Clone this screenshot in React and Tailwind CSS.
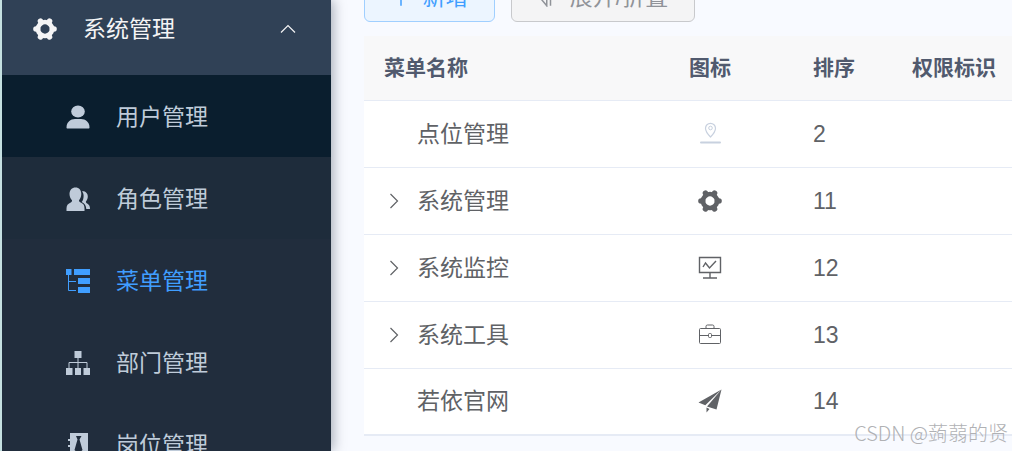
import React, { useState } from 'react';

const GearIcon = () => (
  <svg className="w-6 h-6" viewBox="-12 -12 24 24" fill="none" stroke="currentColor">
    <circle r="7" strokeWidth="4.600" />
    {[0, 60, 120, 180, 240, 300].map((a) => (
      <path key={a} d="M7.500 0H9" strokeWidth="5.600" strokeLinecap="round" transform={`rotate(${a})`} />
    ))}
  </svg>
);

const UserIcon = () => (
  <svg className="w-6 h-6" viewBox="0 0 24 24" fill="currentColor">
    <ellipse cx="12" cy="6.500" rx="6.800" ry="6" />
    <path d="M.5 22.500C.5 17 4.500 14 9 14h6c4.500 0 8.500 3 8.500 8.500 0 .7-.4 1-1 1h-21c-.6 0-1-.3-1-1z" />
  </svg>
);

const PeoplesIcon = () => (
  <svg className="w-6 h-6" viewBox="0 0 24 24" fill="currentColor">
    <path d="M9.500.5c3.600 0 5.800 2.700 5.800 6.500 0 2.500-1 4.800-2.300 6.200 0 1.300.6 1.800 2.200 2.500 2.400 1.100 3.300 2.600 3.300 5.800v2.500H.5v-2.500c0-3.200 1.400-4.700 3.800-5.800 1.200-.6 1.900-1.200 1.700-2.500C4.500 11.800 3.500 9.500 3.500 7c0-3.800 2.400-6.500 6-6.500z" />
    <path d="M16 4.300c3.200-.3 5.800 1.700 5.800 5.200 0 2.200-.8 3.700-1.900 5 0 1 .5 1.500 1.300 2.100 1.900 1.100 2.800 2.700 2.800 5.400h-3.700c-.2-3.300-1.600-5.400-4.600-6.900 1.400-1.700 1.900-4 1.900-6.300 0-1.700-.6-3.300-1.600-4.500z" />
  </svg>
);

const TreeTableIcon = () => (
  <svg className="w-6 h-6" viewBox="0 0 24 24" fill="currentColor">
    <path d="M0 0h5.500v6H0zM8 0h16v6H8zM12 9h12v6H12zM12 18h12v6H12z" />
    <path d="M2.500 6v15.500H10M2.500 12.500H10" fill="none" stroke="currentColor" />
  </svg>
);

const TreeIcon = () => (
  <svg className="w-6 h-6" viewBox="0 0 24 24" fill="currentColor">
    <path d="M8.500 0h7v7h-7zM0 17h6.500v7H0zM9 17h6v7H9zM17.500 17H24v7h-6.500z" />
    <path d="M12 7v10M3 17v-5.500h18V17" fill="none" stroke="currentColor" />
  </svg>
);

const PostIcon = () => (
  <svg className="w-6 h-6" viewBox="0 0 24 24" fill="currentColor">
    <path fillRule="evenodd" d="M4 0h18v24H4v-4H2v-2h2v-4H2v-2h2V8H2V6h2zM10 3l1.500 3.500L8.500 17l4 4 4-4-3-10.500L15.500 3z" />
  </svg>
);

const PointIcon = () => (
  <svg className="w-6 h-6 text-[#c8d1df]" viewBox="0 0 24 24" fill="none" stroke="currentColor">
    <path d="M12.500 15C9.500 12 7.500 9 7.500 6.300a5 5 0 0 1 10 0C17.500 9 15.500 12 12.500 15z" strokeWidth="1.200" />
    <circle cx="12.500" cy="6" r="1.800" />
    <path d="M3 20.500h19" strokeWidth="2" strokeLinecap="round" />
  </svg>
);

const MonitorIcon = () => (
  <svg className="w-6 h-6" viewBox="0 0 24 24" fill="none" stroke="currentColor" strokeWidth="1.400">
    <path d="M1.500 1.500h21v15h-21zM12 16.500v5.500M5 22h14" />
    <path d="M5 11l2.500-4 4 5 6.500-7" />
  </svg>
);

const ToolIcon = () => (
  <svg className="w-6 h-6" viewBox="0 0 24 24" fill="none" stroke="currentColor">
    <rect x="1.500" y="5.500" width="21" height="15" rx="1" />
    <path d="M8 5.500V3.500Q8 2 9.500 2h5Q16 2 16 3.500v2M1.500 12.500h9M13.500 12.500h9" />
    <rect x="10.500" y="10.500" width="3" height="4" rx="1" />
  </svg>
);

const GuideIcon = () => (
  <svg className="w-6 h-6" viewBox="0 0 24 24" fill="currentColor">
    <path d="M23.500.5L.5 13.500l6.800 2.700zM23.500.5L9 17.500l9.500 3zM8.500 18.500v5l3-3.600z" />
  </svg>
);

const LineIcon = ({ className, d }) => (
  <svg className={className} viewBox="0 0 16 16" fill="none" stroke="currentColor" strokeWidth="1.200">
    <path d={d} />
  </svg>
);

const menus = [
  { name: '用户管理', icon: UserIcon, style: 'bg-[#0a1e2e] text-[#bfcbd9]' },
  { name: '角色管理', icon: PeoplesIcon, style: 'bg-[#1e2c3b] text-[#bfcbd9]' },
  { name: '菜单管理', icon: TreeTableIcon, style: 'text-[#409eff]' },
  { name: '部门管理', icon: TreeIcon, style: 'text-[#bfcbd9]' },
  { name: '岗位管理', icon: PostIcon, style: 'text-[#bfcbd9]' },
];

const rows = [
  { name: '点位管理', icon: PointIcon, sort: 2 },
  { name: '系统管理', icon: GearIcon, sort: 11, children: true },
  { name: '系统监控', icon: MonitorIcon, sort: 12, children: true },
  { name: '系统工具', icon: ToolIcon, sort: 13, children: true },
  { name: '若依官网', icon: GuideIcon, sort: 14 },
];

const Sidebar = () => {
  const [open, setOpen] = useState(true);

  return (
    <aside className="relative z-10 w-[331px] shrink-0 bg-[#212d3d] border-l-2 border-[#c5e0e1] shadow-[2px_0_12px_rgba(0,21,41,0.35)]">
      <button
        onClick={() => setOpen(!open)}
        aria-expanded={open}
        className="-mt-[18px] flex h-[93px] w-full items-center bg-[#304156] pl-[31px] pr-[35px] text-[#f4f4f5]"
      >
        <GearIcon />
        <span className="ml-[26px] flex-1 text-left">系统管理</span>
        <LineIcon className="w-4 h-4" d="M1 11.500l7-7 7 7" />
      </button>
      {open && (
        <nav>
          {menus.map(({ name, icon: Icon, style }) => (
            <a key={name} href="#" className={`flex h-[82px] items-center gap-[26px] pl-16 pt-px ${style}`}>
              <Icon />
              <span>{name}</span>
            </a>
          ))}
        </nav>
      )}
    </aside>
  );
};

const App = () => (
  <div className="relative flex h-screen overflow-hidden bg-[#f8faff] font-['Liberation_Sans','Noto_Sans_CJK_SC',sans-serif] text-[23px] leading-8 text-[#606266]">
    <Sidebar />

    <main className="min-w-0 flex-1 pl-[33px]">
      {/* 工具栏 */}
      <div className="-mt-7 flex gap-4">
        <button className="flex h-[50px] w-[131px] items-center justify-center gap-3 rounded-md border border-[#a0cfff] bg-[#ecf5ff] text-[#409eff]">
          <LineIcon className="w-5 h-5" d="M8 1v14M1 8h14" />
          新增
        </button>
        <button className="flex h-[50px] w-[184px] items-center justify-center gap-3 rounded-md border border-[#c8c9cc] bg-[#f4f4f5] text-[#909399]">
          <LineIcon className="w-5 h-5" d="M7 1v14L2 9M10 15V1l5 6" />
          展开/折叠
        </button>
      </div>

      {/* 菜单表格 */}
      <table className="mt-[14px] w-full table-fixed border-collapse bg-white text-left">
        <thead className="bg-[#f8f8f9] text-[21px] text-[#515a6e]">
          <tr className="h-16 border-b border-[#e6ebf5]">
            <th className="w-[263px] pl-5">菜单名称</th>
            <th className="w-[166px] text-center">图标</th>
            <th className="w-[99px] pl-5">排序</th>
            <th className="pl-5">权限标识</th>
          </tr>
        </thead>
        <tbody>
          {rows.map(({ name, icon: Icon, sort, children }) => (
            <tr key={name} className="h-[67px] border-b border-[#e6ebf5] last:border-b-2">
              <td className="pl-[22px]">
                <div className="flex items-center gap-[15px]">
                  {children ? (
                    <button aria-label="展开" className="w-4 h-4">
                      <LineIcon className="w-4 h-4" d="M4.500 1l7 7-7 7" />
                    </button>
                  ) : (
                    <span className="w-4" />
                  )}
                  <span>{name}</span>
                </div>
              </td>
              <td>
                <div className="flex justify-center">
                  <Icon />
                </div>
              </td>
              <td className="pl-5">{sort}</td>
              <td></td>
            </tr>
          ))}
        </tbody>
      </table>
    </main>

    {/* 水印 */}
    <span className="absolute bottom-0.5 right-1 font-['Noto_Sans_CJK_SC',sans-serif] text-[20px] font-light text-[#b0b1b4]">CSDN @蒟蒻的贤</span>
  </div>
);

export default App;
